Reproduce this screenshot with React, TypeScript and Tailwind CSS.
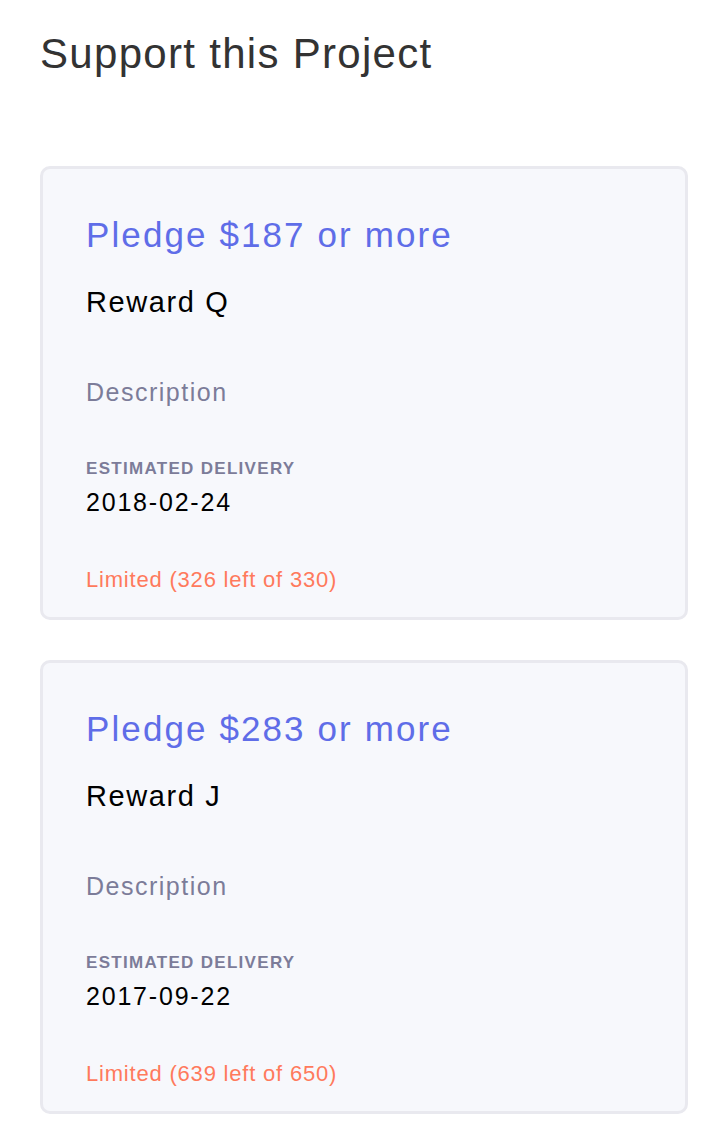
import React from "react";

type Reward = { amount: number; name: string; date: string; left: number; total: number };

const rewards: Reward[] = [
  { amount: 187, name: "Reward Q", date: "2018-02-24", left: 326, total: 330 },
  { amount: 283, name: "Reward J", date: "2017-09-22", left: 639, total: 650 },
];

function RewardCard({ r }: { r: Reward }) {
  return (
    <div className="w-[648px] rounded-[10px] border-[3px] border-[#e9e9ef] bg-[#f7f8fc] pl-[43px] pr-[43px] pt-[46px] pb-[23px]">
      <div className="text-[35px] leading-[40px] tracking-[2.1px] text-[#5f6de8]">
        Pledge ${r.amount} or more
      </div>
      <div className="mt-[29px] text-[29px] leading-[36px] tracking-[1.6px] text-black">{r.name}</div>
      <div className="mt-[56px] text-[25px] leading-[32px] tracking-[1.5px] text-[#7c7c99]">Description</div>
      <div className="mt-[51px] text-[17px] font-bold leading-[20px] tracking-[1.3px] text-[#7c7c99]">
        ESTIMATED DELIVERY
      </div>
      <div className="mt-[8px] text-[25px] leading-[30px] tracking-[1.8px] text-black">{r.date}</div>
      <div className="mt-[49px] text-[22px] leading-[28px] tracking-[0.8px] text-[#ff7a5c]">
        Limited ({r.left} left of {r.total})
      </div>
    </div>
  );
}

export default function App() {
  return (
    <div className="min-h-[1142px] bg-white px-10 pt-[30px] font-['Liberation_Sans',Arial,sans-serif]">
      <h1 className="text-[42px] leading-[48px] tracking-[1.3px] text-[#333333]">Support this Project</h1>
      <div className="mt-[88px] flex flex-col gap-[40px]">
        {rewards.map((r) => (
          <RewardCard key={r.amount} r={r} />
        ))}
      </div>
    </div>
  );
}
